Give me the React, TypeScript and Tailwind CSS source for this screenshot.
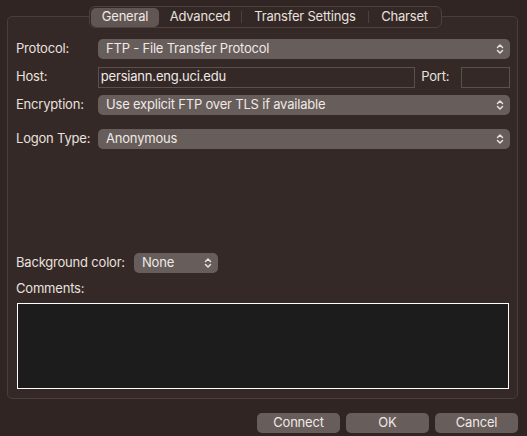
import React from "react";

function Chevrons() {
  return (
    <svg width="8" height="12" viewBox="0 0 8 12" fill="none" stroke="#e8e2e0" strokeWidth="1.5" strokeLinecap="round" strokeLinejoin="round">
      <path d="M1.5 4.5 L4 2 L6.5 4.5" />
      <path d="M1.5 7.5 L4 10 L6.5 7.5" />
    </svg>
  );
}

function Select({ value, className }: { value: string; className: string }) {
  return (
    <div className={`flex items-center justify-between rounded-[5px] bg-[#675d5a] pl-[8px] pr-[6px] h-[20px] text-[#efe9e7] ${className}`}>
      <span>{value}</span>
      <Chevrons />
    </div>
  );
}

export default function App() {
  const tabs = [
    { name: "General", w: "w-[68px]" },
    { name: "Advanced", w: "w-[82px]" },
    { name: "Transfer Settings", w: "w-[126px]" },
    { name: "Charset", w: "w-[71px]" },
  ];
  return (
    <div
      className="w-[527px] h-[436px] bg-[#302523] text-[13px] tracking-[-0.2px] text-[#e8e1df] relative overflow-hidden"
      style={{ fontFamily: "Inter, 'Noto Sans', sans-serif" }}
    >
      <div className="pt-[16px] pl-[7px] pr-[9px]">
        <div className="h-[383px] rounded-[5px] border border-[#4a3e3b] bg-[#352927] relative">
          <div className="absolute left-[81px] top-[-11px] flex h-[22px] items-center rounded-[6px] border border-[#4d413e] bg-[#342826] p-[1px]">
            {tabs.map((t, i) => (
              <div key={t.name} className="flex items-center">
                {i > 1 && <div className="w-px h-[12px] bg-[#4d413e]" />}
                <div
                  className={`${t.w} h-[19px] flex items-center justify-center rounded-[5px] ${i === 0 ? "bg-[#615653] text-[#efe9e7]" : "text-[#e8e1df]"}`}
                >
                  {t.name}
                </div>
              </div>
            ))}
          </div>
          <div className="pt-[22px] pl-[8px] pr-[7px] flex flex-col">
            <div className="flex items-center h-[20px]">
              <span className="w-[82px]">Protocol:</span>
              <Select value="FTP - File Transfer Protocol" className="flex-1" />
            </div>
            <div className="flex items-center h-[20px] mt-[8px]">
              <span className="w-[82px]">Host:</span>
              <div className="w-[318px] h-[21px] border border-[#5c504d] flex items-center pl-[2px] text-[#efe9e7]">persiann.eng.uci.edu</div>
              <span className="ml-[6px] w-[40px]">Port:</span>
              <div className="w-[49px] h-[21px] border border-[#5c504d]" />
            </div>
            <div className="flex items-center h-[20px] mt-[8px]">
              <span className="w-[82px]">Encryption:</span>
              <Select value="Use explicit FTP over TLS if available" className="flex-1" />
            </div>
            <div className="flex items-center h-[20px] mt-[14px]">
              <span className="w-[82px]">Logon Type:</span>
              <Select value="Anonymous" className="flex-1" />
            </div>
            <div className="flex items-center h-[20px] mt-[104px]">
              <span className="w-[118px]">Background color:</span>
              <Select value="None" className="w-[84px]" />
            </div>
            <div className="mt-[8px] h-[16px] flex items-center">Comments:</div>
            <div className="mt-[6px] ml-[1px] w-[492px] h-[86px] border border-white bg-[#1c1c1c]" />
          </div>
        </div>
      </div>
      <div className="flex justify-end gap-[6px] pr-[9px] mt-[14px]">
        {["Connect", "OK", "Cancel"].map((b) => (
          <div key={b} className="w-[83px] h-[20px] rounded-[5px] bg-[#675d5a] flex items-center justify-center text-[#efe9e7]">
            {b}
          </div>
        ))}
      </div>
    </div>
  );
}
